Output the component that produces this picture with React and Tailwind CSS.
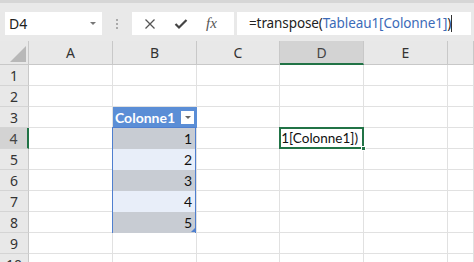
import React from "react";

const COLS = ["A", "B", "C", "D", "E", ""];
const ui = { fontFamily: '"Noto Sans", "Open Sans", sans-serif' };
const cellFont = { fontFamily: 'Lato, "Liberation Sans", sans-serif' };

function ColHeader({ label }) {
  const active = label === "D";
  return (
    <div
      className={
        "flex items-center justify-center border-r border-[#c8c8c8] text-[14px] " +
        (active
          ? "bg-[#d3d3d3] border-b-2 border-b-[#217346] text-[#444]"
          : "bg-[#e8e8e8] border-b border-b-[#c8c8c8] text-[#333]")
      }
      style={ui}
    >
      {label}
    </div>
  );
}

function RowHeader({ n }) {
  const active = n === 4;
  return (
    <div
      className={
        "flex items-center justify-center border-b border-[#d4d4d4] text-[14px] " +
        (active
          ? "bg-[#d3d3d3] border-r-2 border-r-[#217346] text-[#444]"
          : "bg-[#e8e8e8] border-r border-r-[#c8c8c8] text-[#333]")
      }
      style={ui}
    >
      {n}
    </div>
  );
}

function Cell({ children, className = "" }) {
  return (
    <div className={"border-r border-b border-[#e1e1e1] bg-white " + className}>
      {children}
    </div>
  );
}

export default function App() {
  const rows = [1, 2, 3, 4, 5, 6, 7, 8, 9, 10];
  return (
    <div className="w-[474px] h-[262px] overflow-hidden bg-white">
      {/* formula bar */}
      <div className="h-[41px] bg-[#e9e9e9] border-t-[3px] border-[#d6d6d6] flex items-start pt-[9px] pl-[5px]">
        <div className="w-[97px] h-[23px] bg-white flex items-center justify-between pl-[4px] pr-[6px]">
          <span className="text-[14px] text-[#222]" style={ui}>D4</span>
          <span className="w-0 h-0 border-l-[3px] border-r-[3px] border-t-[3px] border-l-transparent border-r-transparent border-t-[#777]" />
        </div>
        <div className="w-[30px] h-[23px] flex flex-col items-center justify-center gap-[2px]">
          <span className="w-[2px] h-[2px] bg-[#aaa]" />
          <span className="w-[2px] h-[2px] bg-[#aaa]" />
          <span className="w-[2px] h-[2px] bg-[#aaa]" />
        </div>
        <div className="w-[102px] h-[23px] bg-white flex items-center pl-[12px] gap-[18px]">
          <svg width="12" height="12" viewBox="0 0 12 12">
            <path d="M1.5 1.5 L10.5 10.5 M10.5 1.5 L1.5 10.5" stroke="#555" strokeWidth="1.3" fill="none" />
          </svg>
          <svg width="14" height="12" viewBox="0 0 14 12">
            <path d="M1.5 6 L5 9.5 L12.5 2" stroke="#444" strokeWidth="2.2" fill="none" />
          </svg>
          <span className="text-[15px] italic text-[#555] leading-none" style={{ fontFamily: '"Liberation Serif", serif' }}>
            fx
          </span>
        </div>
        <div className="ml-[3px] w-[234px] h-[23px] bg-white flex items-center pl-[12px]">
          <span className="text-[13.5px] tracking-[-0.1px] whitespace-nowrap text-[#222]" style={ui}>
            =transpose(<span className="text-[#3c6bb8]">Tableau1[Colonne1]</span>)
          </span>
          <span className="w-px h-[17px] bg-[#333]" />
        </div>
      </div>

      {/* grid */}
      <div className="grid grid-cols-[29px_84px_84px_83px_84px_84px_1fr] grid-rows-[24px_repeat(10,21px)]">
        {/* corner */}
        <div className="bg-[#e8e8e8] border-r border-b border-[#c8c8c8] flex items-end justify-end pr-[2px] pb-[2px]">
          <svg width="16" height="16" viewBox="0 0 16 16">
            <path d="M16 0 L16 16 L0 16 Z" fill="#b8b8b8" />
          </svg>
        </div>
        {COLS.map((c, i) => (
          <ColHeader key={i} label={c} />
        ))}

        {rows.map((r) => (
          <React.Fragment key={r}>
            <RowHeader n={r} />
            <Cell />
            {r === 3 ? (
              <div className="bg-[#5b8ed6] border-b border-[#5b8ed6] flex items-center justify-between pl-[2px] pr-[3px]">
                <span className="text-[14px] font-bold text-white" style={cellFont}>Colonne1</span>
                <span className="w-[13px] h-[13px] bg-white flex items-center justify-center">
                  <span className="w-0 h-0 border-l-[3px] border-r-[3px] border-t-[3px] border-l-transparent border-r-transparent border-t-[#666]" />
                </span>
              </div>
            ) : r === 4 ? (
              <div className="row-span-5 border-r border-[#e1e1e1] relative">
                <div className="absolute -left-px -top-px right-0 bottom-0 border border-[#4f7fcf] flex flex-col">
                  {[1, 2, 3, 4, 5].map((v) => (
                    <div
                      key={v}
                      className={
                        "h-[21px] flex items-center justify-end pr-[3px] text-[14px] text-[#111] " +
                        (v % 2 === 1 ? "bg-[#c8ccd3]" : "bg-[#e8eef9]")
                      }
                      style={cellFont}
                    >
                      {v}
                    </div>
                  ))}
                  <svg width="4" height="4" viewBox="0 0 4 4" className="absolute right-0 bottom-0">
                    <path d="M4 0 L4 4 L0 4 Z" fill="#4f7fcf" />
                  </svg>
                </div>
              </div>
            ) : r > 4 && r <= 8 ? null : (
              <Cell />
            )}
            <Cell />
            {r === 4 ? (
              <div className="relative border-r border-b border-[#e1e1e1] bg-white">
                <div className="absolute -left-px -top-px -right-px -bottom-px border-2 border-[#217346] overflow-hidden flex items-center justify-end pr-[4px]">
                  <span className="text-[13.5px] whitespace-nowrap text-[#111]" style={cellFont}>
                    =transpose(Tableau1[Colonne1])
                  </span>
                </div>
                <span className="absolute -right-[3px] -bottom-[3px] w-[5px] h-[5px] bg-[#217346] border border-white" />
              </div>
            ) : (
              <Cell />
            )}
            <Cell />
            <Cell />
          </React.Fragment>
        ))}
      </div>
    </div>
  );
}
